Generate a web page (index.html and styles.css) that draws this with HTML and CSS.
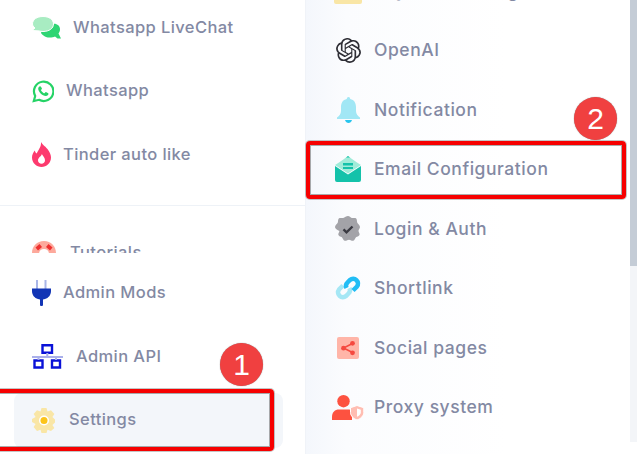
FILE: index.html
```html
<!DOCTYPE html>
<html lang="en">
<head>
<meta charset="utf-8">
<title>Settings menu</title>
<link rel="stylesheet" href="styles.css">
</head>
<body>
<div class="screen">
  <aside class="left">
    <ul class="group group-top">
      <li class="item"><svg width="29" height="23" viewBox="0 0 29 23"><path fill="#2ed573" d="M11 9h7c5-3 10 0 10 4 0 2-.6 3.300-1.500 4.500L29 22.500h-3.500l-2.500-2c-2 1-6 1.500-9 .5-2-.7-4-2.500-5-4z"/><path fill="#a8ecc2" stroke="#fff" stroke-width="1" d="M11 .5c6 0 10.500 3 10.500 7.500S17 15.500 11 15.500c-1.500 0-3-.2-4-.6L0 14.500l3-2.500C1.500 10.800.5 9.500.5 8 .5 3.500 5 .5 11 .5z"/></svg><span>Whatsapp LiveChat</span></li>
      <li class="item"><svg width="22" height="23" viewBox="0 0 22 23"><path fill="none" stroke="#25d366" stroke-width="2.200" d="M1.800 21l1.400-5A9.700 9.700 0 1 1 7 19.800z"/><path fill="#25d366" d="M8 6.200c-.6 0-1.800 1-1.800 2.600 0 2.800 4 7.200 7.600 7.200 1.700 0 2.700-1.300 2.700-2.200 0-.5-2.300-1.800-2.800-1.700-.5.200-.8 1.100-1.300 1.200-.8.100-3.300-2.300-3.400-3.100 0-.5.900-1 1-1.400 0-.5-1.200-2.600-2-2.600z"/></svg><span>Whatsapp</span></li>
      <li class="item"><svg width="19" height="25" viewBox="0 0 19 25"><path fill="#fd3a6e" fill-rule="evenodd" d="M9 0c1.500 3 5 4.500 7.500 8.500C18 11 19 13 19 15.500 19 21 14.500 25 9.500 25S0 21 0 15.500C0 12.500 1.300 10.500 2.800 8.500c.4 1.500 1 2.500 2 3C6 8 9.500 5 9 0zM9.800 12c0 2-3.800 3.500-3.800 6.300 0 2 1.600 3.500 3.500 3.500s3.500-1.500 3.500-3.500c0-2.800-2-4-3.200-6.300z"/></svg><span>Tinder auto like</span></li>
    </ul>
    <div class="clipped">
      <div class="item item-clip"><svg class="gauge" width="24" height="24" viewBox="0 0 24 24"><path fill="#fda99c" fill-rule="evenodd" d="M0 12C0 5 5 0 12 0s12 5 12 12v12H0zM7 13c0 3 2 5 5 5s5-2 5-5-2-5-5-5-5 2-5 5z"/><path fill="#ef2f2f" d="M3.500 6.500l4-3.500 2.500 3-4 3.500zM20.500 6.500l-4-3.500-2.500 3 4 3.500z"/></svg><span>Tutorials</span></div>
    </div>
    <ul class="group group-bottom">
      <li class="item"><svg width="19" height="26" viewBox="0 0 19 26"><path fill="#a9b6e8" d="M4 0h2v9H4zM12.500 0h2v9h-2z"/><path fill="#1235b5" d="M0 8.500h19V11c0 4-2.500 7-6 8l-2 .6V25c0 .6-.7 1-1.500 1S8 25.600 8 25v-5.400L6 19c-3.500-1-6-4-6-8z"/></svg><span>Admin Mods</span></li>
      <li class="item"><svg width="32" height="25" viewBox="0 0 32 25"><path fill="none" stroke="#0a12d8" stroke-width="2.400" d="M10.500 1.200h9.500v7.500h-9.500zM2.500 16.500h8v7h-8zM20 16.500h8v7h-8z"/><path fill="none" stroke="#aab0ea" stroke-width="2" d="M0 13h31M15.300 9v4M6.500 13v3M24 13v3"/></svg><span>Admin API</span></li>
      <li class="item item-active"><svg width="25" height="25" viewBox="0 0 25 25"><path fill="#f9e6a6" d="M9.500 0h5l1 3.500 3.500-1.300 3.400 3.800-2 3 2.600 2.500v3l-2.600 2.500 2 3L19 23l-3.500-1.300-1 3.300h-5l-1-3.300L5 23l-3.400-4 2-3L0 14v-3l3.600-2-2-3L5 2.200l3.500 1.300z"/><circle cx="12" cy="12.500" r="5" fill="#fff"/><circle cx="12" cy="12.500" r="3.500" fill="#fcc419"/></svg><span>Settings</span></li>
    </ul>
  </aside>
  <main class="right">
    <ul class="settings">
      <li class="row"><span class="ico"><svg width="28" height="26" viewBox="0 0 28 26"><rect width="28" height="26" y="0" rx="2" fill="#f9e6a6"/></svg></span><span class="label">Payment Settings</span></li>
      <li class="row"><span class="ico"><svg width="25" height="25" viewBox="0 0 24 24"><path fill="#2f2f36" d="M22.2819 9.8211a5.9847 5.9847 0 0 0-.5157-4.9108 6.0462 6.0462 0 0 0-6.5098-2.9A6.0651 6.0651 0 0 0 4.9807 4.1818a5.9847 5.9847 0 0 0-3.9977 2.9 6.0462 6.0462 0 0 0 .7427 7.0966 5.98 5.98 0 0 0 .511 4.9107 6.051 6.051 0 0 0 6.5146 2.9001A5.9847 5.9847 0 0 0 13.2599 24a6.0557 6.0557 0 0 0 5.7718-4.2058 5.9894 5.9894 0 0 0 3.9977-2.9001 6.0557 6.0557 0 0 0-.7475-7.0729zm-9.022 12.6081a4.4755 4.4755 0 0 1-2.8764-1.0408l.1419-.0804 4.7783-2.7582a.7948.7948 0 0 0 .3927-.6813v-6.7369l2.02 1.1686a.071.071 0 0 1 .038.052v5.5826a4.504 4.504 0 0 1-4.4945 4.4944zm-9.6607-4.1254a4.4708 4.4708 0 0 1-.5346-3.0137l.142.0852 4.783 2.7582a.7712.7712 0 0 0 .7806 0l5.8428-3.3685v2.3324a.0804.0804 0 0 1-.0332.0615L9.74 19.9502a4.4992 4.4992 0 0 1-6.1408-1.6464zM2.3408 7.8956a4.485 4.485 0 0 1 2.3655-1.9728V11.6a.7664.7664 0 0 0 .3879.6765l5.8144 3.3543-2.0201 1.1685a.0757.0757 0 0 1-.071 0l-4.8303-2.7865A4.504 4.504 0 0 1 2.3408 7.872zm16.5963 3.8558L13.1038 8.364 15.1192 7.2a.0757.0757 0 0 1 .071 0l4.8303 2.7913a4.4944 4.4944 0 0 1-.6765 8.1042v-5.6772a.79.79 0 0 0-.407-.667zm2.0107-3.0231l-.142-.0852-4.7735-2.7818a.7759.7759 0 0 0-.7854 0L9.409 9.2297V6.8974a.0662.0662 0 0 1 .0284-.0615l4.8303-2.7866a4.4992 4.4992 0 0 1 6.6802 4.66zM8.3065 12.863l-2.02-1.1638a.0804.0804 0 0 1-.038-.0567V6.0742a4.4992 4.4992 0 0 1 7.3757-3.4537l-.142.0805L8.704 5.459a.7948.7948 0 0 0-.3927.6813zm1.0976-2.3654l2.602-1.4998 2.6069 1.4998v2.9994l-2.5974 1.4997-2.6067-1.4997Z"/></svg></span><span class="label">OpenAI</span></li>
      <li class="row"><span class="ico"><svg width="23" height="26" viewBox="0 0 23 26"><path fill="#a1e7f5" d="M11.500 0c1 0 1.700.8 1.700 2 4 .8 5.800 4 5.800 8v4c0 3 1.700 4.800 4 6.500v1.500H0v-1.500C2.300 18.800 4 17 4 14v-4c0-4 1.800-7.200 5.800-8 0-1.200.7-2 1.700-2z"/><path fill="#29c5ee" d="M8 23h7c-.5 1.800-2 3-3.500 3S8.500 24.800 8 23z"/></svg></span><span class="label">Notification</span></li>
      <li class="row"><span class="ico"><svg width="26" height="26" viewBox="0 0 26 26"><path fill="#14c2aa" d="M0 10l13 8.500L26 10v14a2 2 0 0 1-2 2H2a2 2 0 0 1-2-2z"/><path fill="#a0ecd9" d="M0 9l4-2.500 5-3.500 4-3 4 3 5 3.500L26 9l-13 8.500z"/><path fill="#14c2aa" d="M8 7h10v2.500H8zM8 11h10v2H8zM11 1.500h4L13 0z"/></svg></span><span class="label">Email Configuration</span></li>
      <li class="row"><span class="ico"><svg width="26" height="26" viewBox="0 0 26 26"><path fill="#a3a3a8" d="M13 0c1.500 0 2.500 1.600 3.800 1.900 1.500.3 3.300-.4 4.400.6 1 1 .6 2.800 1 4.100.4 1.300 2.800 2.700 2.800 4.400 0 1.600-1.600 2.500-1.500 3.900.1 1.400 1.500 2.600 1 4-.6 1.400-2.500 1.500-3.500 2.400-1 1-1.300 3-2.800 3.500-1.500.4-2.800-1-4.200-1s-2.900 1.400-4.300 1c-1.500-.5-1.800-2.500-2.800-3.500-1-.9-3-1-3.500-2.400-.5-1.400.9-2.600 1-4C1.500 13.500 0 12.600 0 11c0-1.700 2.400-3.100 2.800-4.400.4-1.300 0-3.100 1-4.100 1.100-1 2.900-.3 4.400-.6C9.500 1.600 11.500 0 13 0z"/><path fill="none" stroke="#3a3a42" stroke-width="2.400" d="M8.500 13.300l3 3 6-5.800"/></svg></span><span class="label">Login &amp; Auth</span></li>
      <li class="row"><span class="ico"><svg width="26" height="26" viewBox="0 0 26 26"><g fill="none" stroke-width="4.500"><path stroke="#a5e7f5" d="M14.500 13c1 2 .5 4-1 5.500L11 21a4.800 4.800 0 0 1-7-6.500L8 10.500"/><path stroke="#21bdf5" d="M11.500 13c-1-2-.5-4 1-5.500L15 5a4.800 4.800 0 0 1 7 6.500L18 15.500"/></g></svg></span><span class="label">Shortlink</span></li>
      <li class="row"><span class="ico"><svg width="22" height="22" viewBox="0 0 22 22"><rect width="22" height="22" rx="2" fill="#ffb5a8"/><path fill="none" stroke="#f5493f" stroke-width="1.500" d="M15.500 6.500L6.500 11l9 4.500"/><circle cx="15.500" cy="6.300" r="2.400" fill="#f5493f"/><circle cx="6.500" cy="11.200" r="2.400" fill="#f5493f"/><circle cx="15.500" cy="15.800" r="2.400" fill="#f5493f"/></svg></span><span class="label">Social pages</span></li>
      <li class="row"><span class="ico"><svg width="32" height="25" viewBox="0 0 32 25"><circle cx="11.500" cy="6.200" r="6.200" fill="#fd5240"/><path fill="#fd5240" d="M0 25v-3c0-5 3-7.500 7-7.500h9c1.500 0 3 .5 4 1.300V25z"/><path fill="#ffbdb2" stroke="#fff" stroke-width="1" d="M25 10.500l6.800 2.200v5c0 3-3 6-6.800 7.300-3.500-1.300-6.500-4.300-6.500-7.300v-5z"/><path fill="#fff" d="M25 13.500l3.800 1.200v3c0 1.500-1.800 3-3.800 4z"/></svg></span><span class="label">Proxy system</span></li>
    </ul>
    <div class="scrollbar"><div class="thumb"></div></div>
  </main>
  <div class="mark mark-settings"></div>
  <div class="mark mark-email"></div>
  <div class="badge badge-one">1</div>
  <div class="badge badge-two">2</div>
</div>
</body>
</html>
```
FILE: styles.css
```css
* { box-sizing: border-box; }
html, body { margin: 0; padding: 0; background: #fff; }
ul { list-style: none; margin: 0; padding: 0; }
.screen {
  position: relative;
  width: 639px;
  height: 454px;
  overflow: hidden;
  display: grid;
  grid-template-columns: 306px 333px;
  font-family: Inter, "Open Sans", sans-serif;
  font-weight: 500;
  color: #8389a3;
}
.left {
  display: flex;
  flex-direction: column;
  border-right: 1px solid #f0f3f8;
  height: 454px;
  font-size: 16.500px;
  letter-spacing: .4px;
}
.group-top { margin-top: -4px; padding-bottom: 18px; border-bottom: 1px solid #eef2f7; }
.item { display: flex; align-items: center; gap: 12px; height: 63.500px; padding-left: 32px; }
.item span { margin-bottom: 2px; }
.clipped { height: 47px; overflow: hidden; flex: none; }
.item-clip { height: 47px; align-items: flex-end; padding-top: 40px; gap: 14px; }
.item-clip span { margin-bottom: -9px; }
.gauge { margin-top: -4px; margin-bottom: -12px; }
.group-bottom { padding-top: 8px; }
.group-bottom .item { height: 64px; }
.group-bottom .item-active {
  margin: 4px 22px 0 14px;
  height: 55px;
  padding-left: 18px;
  background: #f3f6fa;
  border-radius: 8px;
}
.item svg { flex: none; }
.right {
  display: flex;
  background: linear-gradient(90deg, #f4f7fc 0, #fbfcfe 40px, #fff 200px);
  height: 454px;
  font-size: 17.500px;
  letter-spacing: .55px;
}
.settings { width: 324px; margin-top: -39px; padding-left: 29px; flex: none; }
.row { display: flex; align-items: center; gap: 13px; height: 59.500px; }
.label { margin-bottom: 1px; }
.ico { width: 26px; display: flex; justify-content: center; flex: none; }
.ico svg { flex: none; }
.scrollbar { width: 7px; height: 442px; background: #f3f5f8; flex: none; }
.thumb { height: 266px; background: #c4ccd6; }
.mark {
  position: absolute;
  border: 4px solid #f60000;
  border-radius: 4px;
  box-shadow: 0 0 0 1px rgba(90, 90, 90, .35), inset 0 0 0 1px rgba(90, 90, 90, .5);
}
.mark-settings { left: -10px; top: 389px; width: 284px; height: 62px; }
.mark-email { left: 306px; top: 141px; width: 320px; height: 58px; }
.badge {
  position: absolute;
  width: 43px;
  height: 43px;
  border-radius: 50%;
  background: #f04040;
  color: #fff;
  font-family: "Liberation Sans", sans-serif;
  font-weight: 400;
  font-size: 30px;
  line-height: 43px;
  text-align: center;
  box-shadow: 0 0 1px rgba(60, 60, 60, .7);
}
.badge-one { left: 220px; top: 343px; }
.badge-two { left: 574px; top: 97px; }
```
